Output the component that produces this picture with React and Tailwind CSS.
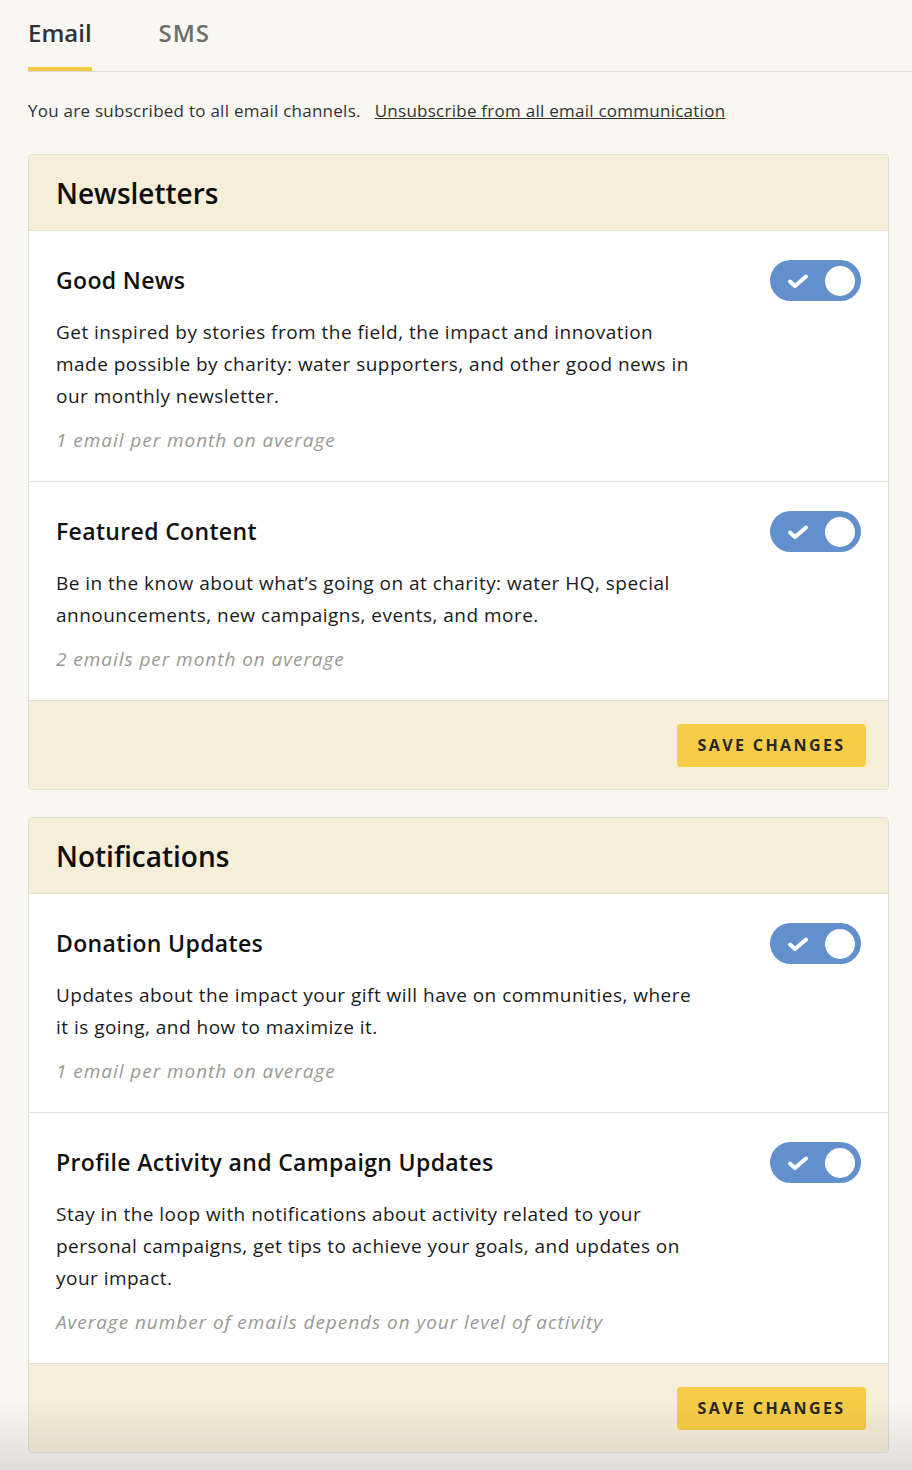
const font = { fontFamily: '"Open Sans", "Lato", sans-serif' };

const sections = [
  {
    title: 'Newsletters',
    items: [
      {
        name: 'Good News',
        text: 'Get inspired by stories from the field, the impact and innovation made possible by charity: water supporters, and other good news in our monthly newsletter.',
        meta: '1 email per month on average',
      },
      {
        name: 'Featured Content',
        text: 'Be in the know about what’s going on at charity: water HQ, special announcements, new campaigns, events, and more.',
        meta: '2 emails per month on average',
      },
    ],
  },
  {
    title: 'Notifications',
    items: [
      {
        name: 'Donation Updates',
        text: 'Updates about the impact your gift will have on communities, where it is going, and how to maximize it.',
        meta: '1 email per month on average',
      },
      {
        name: 'Profile Activity and Campaign Updates',
        text: 'Stay in the loop with notifications about activity related to your personal campaigns, get tips to achieve your goals, and updates on your impact.',
        meta: 'Average number of emails depends on your level of activity',
      },
    ],
  },
];

const Toggle = () => (
  <button className="flex h-[41px] w-[91px] shrink-0 items-center justify-between rounded-full bg-[#6290cc] pl-[17px] pr-[6px]">
    <svg width="22" height="16" viewBox="0 0 22 16" fill="none">
      <path d="M3 8.5l5 4.5L19 3.5" stroke="white" strokeWidth="4" strokeLinecap="round" strokeLinejoin="round" />
    </svg>
    <span className="h-[30px] w-[30px] rounded-full bg-white" />
  </button>
);

const Item = ({ item, last }) => (
  <div className={`bg-white px-[27px] pt-[29px] pb-[26px] ${last ? '' : 'border-b border-[#e3e0d6]'}`}>
    <div className="flex items-center justify-between">
      <h3 className="text-[23px] font-semibold tracking-[0.015em] text-[#111]">{item.name}</h3>
      <Toggle />
    </div>
    <p className="mt-[15px] max-w-[638px] text-[19px] leading-[32px] tracking-[0.025em] text-[#1a1a1a]">{item.text}</p>
    <p className="mt-[13px] text-[19px] italic leading-[30px] tracking-[0.05em] text-[#9a9993]">{item.meta}</p>
  </div>
);

const Section = ({ section }) => (
  <div className="overflow-hidden rounded-[4px] border border-[#e0ddd2]">
    <div className="flex h-[76px] items-center border-b border-[#e3e0d4] bg-[#f6eed8] px-[27px]">
      <h2 className="text-[28px] font-semibold text-[#0d0d0d]">{section.title}</h2>
    </div>
    {section.items.map((item, i) => (
      <Item key={item.name} item={item} last={i === section.items.length - 1} />
    ))}
    <div className="flex h-[89px] items-center justify-end border-t border-[#e3e0d6] bg-[#f6eed8] px-[22px]">
      <button className="h-[43px] w-[189px] rounded-[4px] bg-[#f7cd48] text-[16px] font-bold tracking-[0.15em] text-[#262626]">
        SAVE CHANGES
      </button>
    </div>
  </div>
);

export default function App() {
  return (
    <div className="relative min-h-[1470px] bg-[#f8f7f2] pl-[28px] pr-[23px]" style={font}>
      <div className="-mr-[23px] flex border-b border-[#dcdad4]">
        <div className="mr-[67px] border-b-4 border-[#f6c945] pt-[14px] pb-[15px] text-[24px] font-semibold leading-[38px] text-[#333]">
          Email
        </div>
        <div className="pt-[14px] pb-[19px] text-[24px] font-semibold leading-[38px] tracking-[0.04em] text-[#6e6d68]">SMS</div>
      </div>
      <p className="mt-[28px] text-[17px] leading-[22px] tracking-[0.015em] text-[#333]">
        You are subscribed to all email channels.
        <a className="ml-[14px] underline" href="#">
          Unsubscribe from all email communication
        </a>
      </p>
      <div className="mt-[32px] flex flex-col gap-[27px]">
        {sections.map((s) => (
          <Section key={s.title} section={s} />
        ))}
      </div>
      <div className="pointer-events-none fixed bottom-0 left-0 right-0 h-[70px] bg-gradient-to-b from-transparent to-black/10" />
    </div>
  );
}
